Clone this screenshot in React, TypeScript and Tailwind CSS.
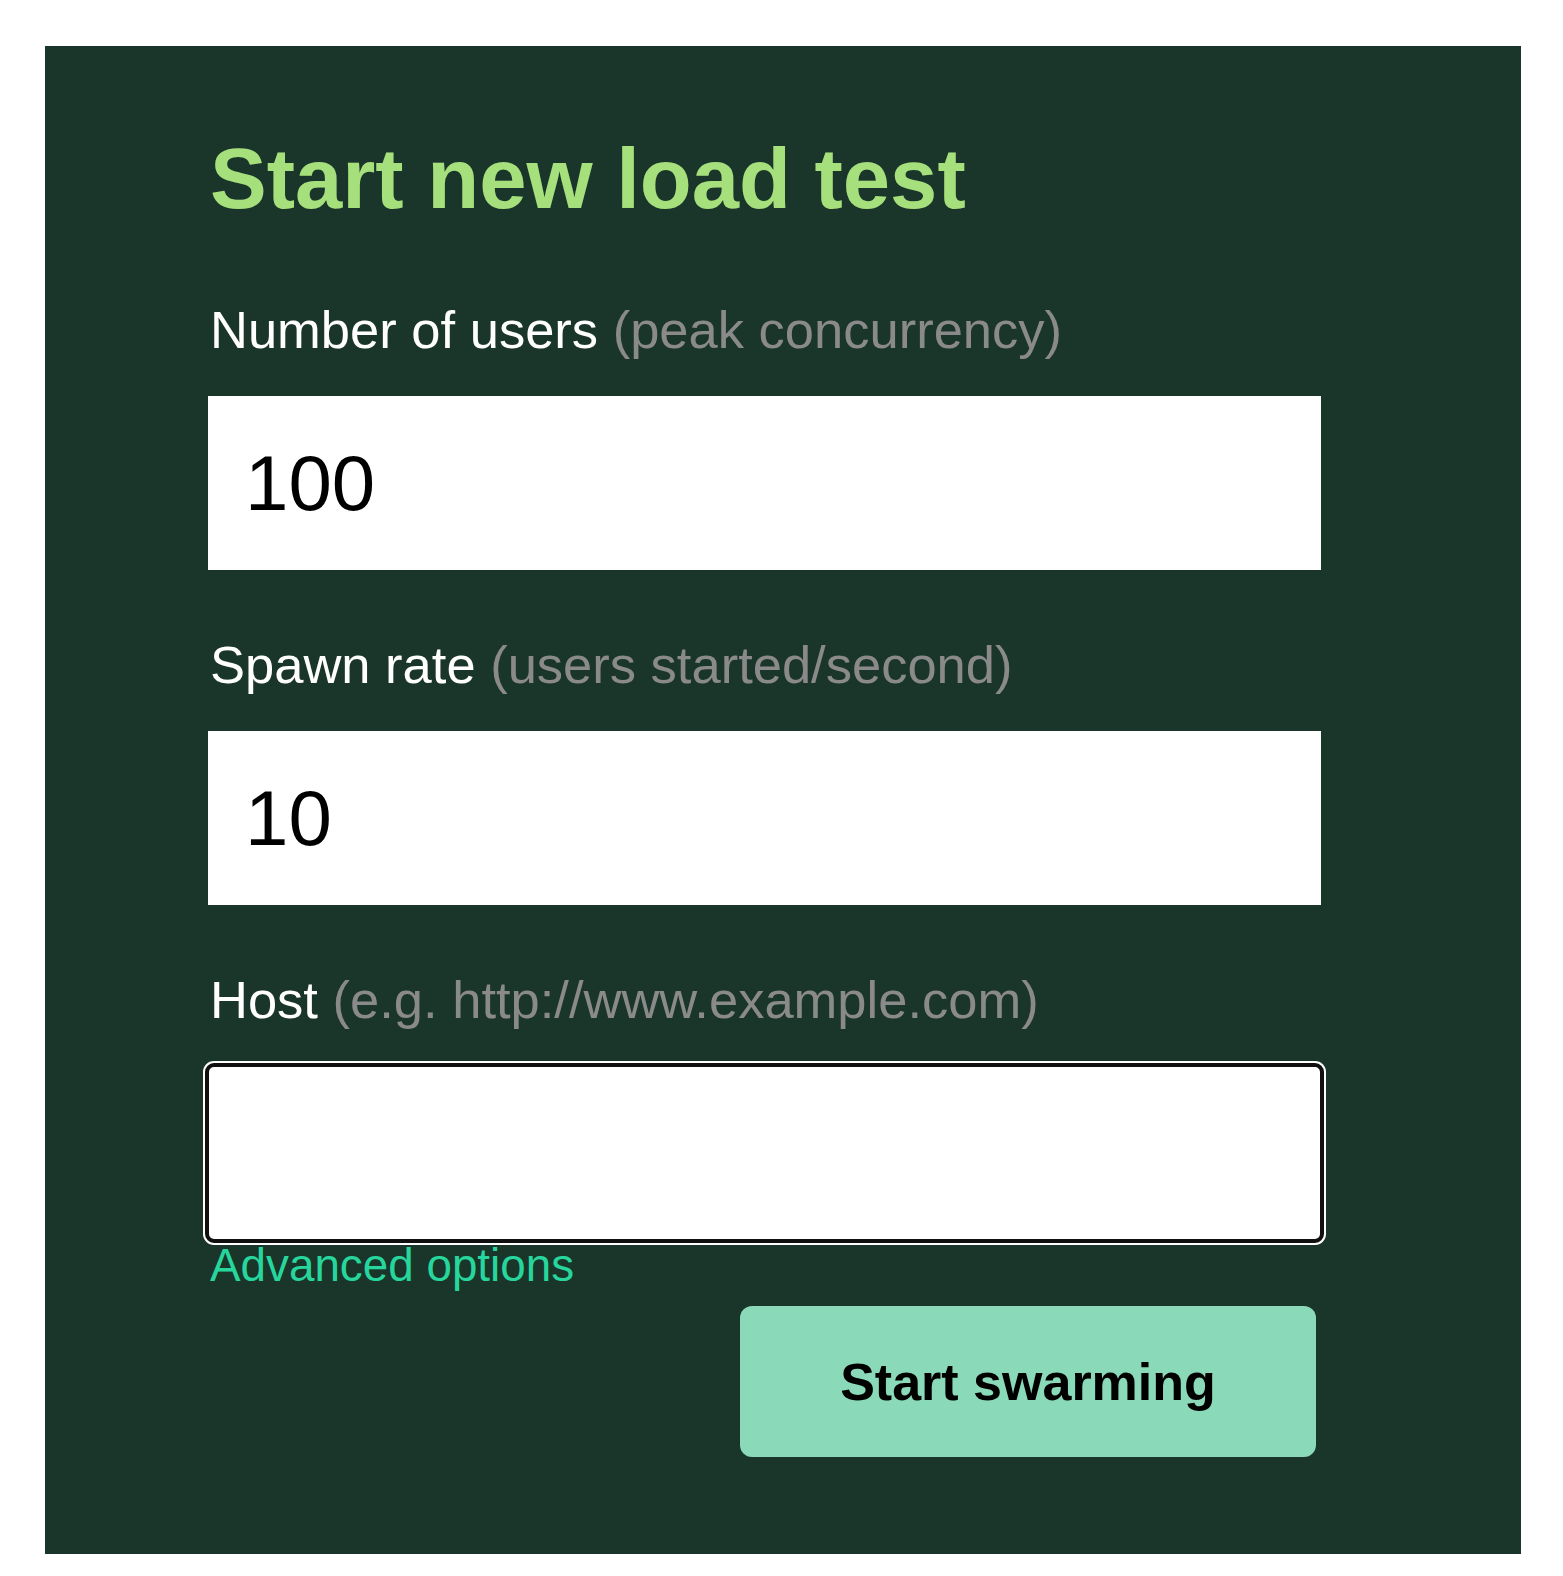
import React from "react";

function Field({
  label,
  hint,
  value,
  focused,
}: {
  label: string;
  hint: string;
  value: string;
  focused?: boolean;
}) {
  return (
    <div className="flex flex-col">
      <label className="pl-[2px] text-[52.5px] leading-[54px] text-white whitespace-nowrap">
        {label} <span className="text-[#8a8a8a]">{hint}</span>
      </label>
      <input
        readOnly
        value={value}
        className={
          focused
            ? "mt-[39px] h-[174px] w-full bg-white px-[37px] text-[78px] text-black rounded-[6px] outline-4 outline-[#101010] outline-offset-[-1px] shadow-[0_0_0_5px_#ffffff]"
            : "mt-[39px] h-[174px] w-full bg-white px-[37px] text-[78px] text-black outline-none"
        }
        style={{ fontFamily: '"Liberation Sans", Arial, sans-serif' }}
      />
    </div>
  );
}

export default function App() {
  return (
    <div
      className="min-h-[1576px] bg-white pt-[46px] pl-[45px]"
      style={{ fontFamily: '"Liberation Sans", Arial, sans-serif' }}
    >
      <div className="w-[1476px] h-[1508px] bg-[#1a352a] pt-[90px] pl-[163px] pr-[200px]">
        <h1 className="pl-[2px] text-[85px] leading-[86px] font-bold text-[#a6e07c] whitespace-nowrap">
          Start new load test
        </h1>
        <div className="mt-[81px] flex flex-col gap-[68px]">
          <Field label="Number of users" hint="(peak concurrency)" value="100" />
          <Field label="Spawn rate" hint="(users started/second)" value="10" />
          <Field
            label="Host"
            hint="(e.g. http://www.example.com)"
            value=""
            focused
          />
        </div>
        <div className="pl-[2px] text-[45.8px] leading-[52px] text-[#27d69c]">
          Advanced options
        </div>
        <div className="mt-[14px] flex justify-end pr-[5px]">
          <button className="h-[151px] w-[576px] rounded-[12px] bg-[#8ad9b9] text-[52px] font-bold text-black">
            Start swarming
          </button>
        </div>
      </div>
    </div>
  );
}
